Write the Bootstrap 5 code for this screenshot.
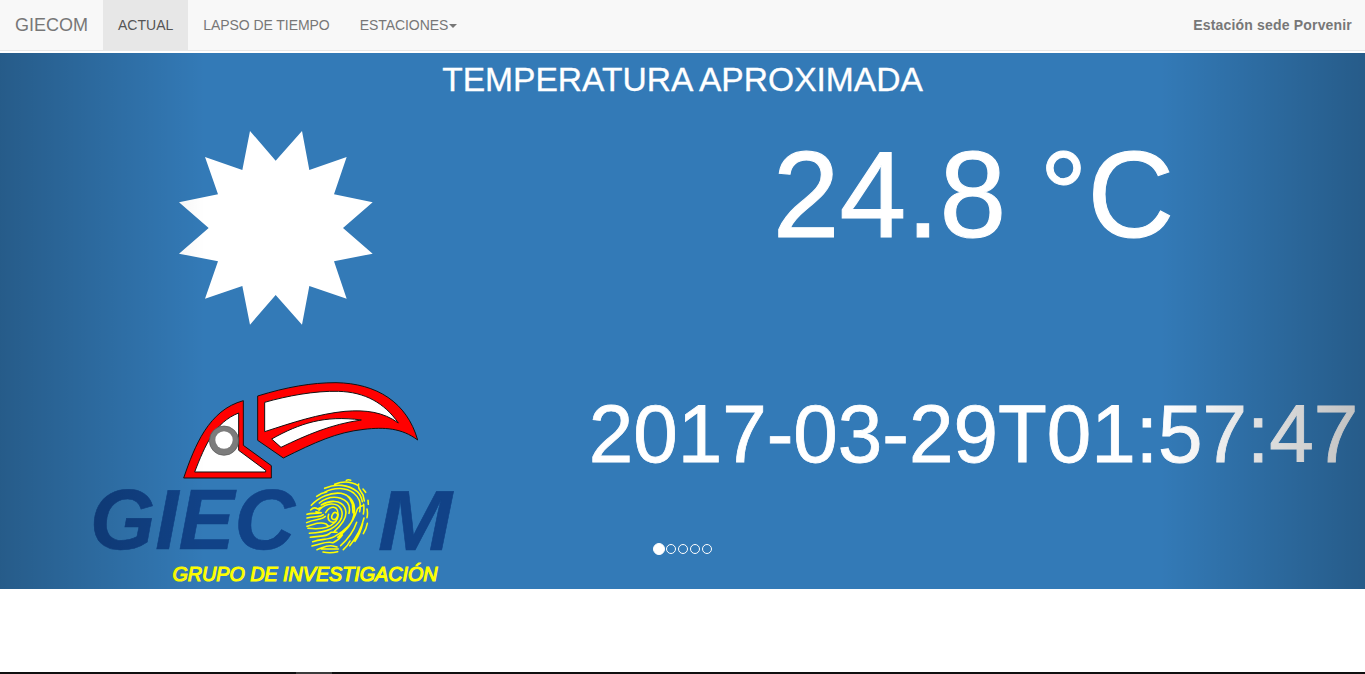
<!DOCTYPE html>
<html lang="es">
<head>
<meta charset="utf-8">
<meta name="viewport" content="width=device-width, initial-scale=1">
<title>GIECOM</title>
<link href="https://cdn.jsdelivr.net/npm/bootstrap@5.3.0/dist/css/bootstrap.min.css" rel="stylesheet">
<style>
body{font-family:"Liberation Sans",Arial,sans-serif;font-size:14px;line-height:20px;height:674px;overflow:hidden;background:#fff}
.topbar{height:51px;background:#f8f8f8;border-bottom:1px solid #e7e7e7!important;margin-bottom:2px}
.topbar .navbar-brand{font-size:18px;line-height:20px;color:#777;padding:15px;margin:0}
.topbar .nav-link{color:#777;padding:15px!important;line-height:20px;letter-spacing:-.06px}
.topbar .nav-link.active{color:#555;background:#e7e7e7;letter-spacing:0}
.topbar .dropdown-toggle::after{border-top:4px solid;border-left:4px solid transparent;border-right:4px solid transparent;margin-left:1px;vertical-align:middle}
.station{color:#777;letter-spacing:.18px;padding-right:13px}
.slide-area{height:536px;background:#337ab7;color:#fff}
.slide-title{font-size:33.6px;line-height:40px;height:67px;padding-top:7px;font-weight:400;-webkit-text-stroke:.3px #fff}
.left-col{width:582px}
.sun{margin-left:160px}
.logo{margin-left:80px;margin-top:35px}
.temp{font-size:120px;line-height:132px;margin-top:8px;-webkit-text-stroke:1px #fff;transform:scaleY(1.025)}
.stamp{font-size:80px;line-height:88px;margin-top:130px;-webkit-text-stroke:.8px #fff;transform:scaleY(1.03)}
.edge{width:15%;opacity:.5;pointer-events:none}
.edge-l{background:linear-gradient(to right,rgba(0,0,0,.5),rgba(0,0,0,0))}
.edge-r{background:linear-gradient(to left,rgba(0,0,0,.5),rgba(0,0,0,0))}
.dots{bottom:34px}
.dot{width:10px;height:10px;margin:1px;border:1px solid #fff;border-radius:50%}
.dot.on{width:12px;height:12px;margin:0;background:#fff}
.bottom-strip{height:2px;background:#101010;padding-left:296px}
.bottom-strip span{width:36px;height:2px;background:#3c3c3c}
</style>
</head>
<body class="d-flex flex-column">
<nav class="topbar navbar navbar-expand p-0 align-items-start flex-shrink-0">
  <a class="navbar-brand" href="#">GIECOM</a>
  <ul class="navbar-nav">
    <li class="nav-item"><a class="nav-link active" href="#">ACTUAL</a></li>
    <li class="nav-item"><a class="nav-link" href="#">LAPSO DE TIEMPO</a></li>
    <li class="nav-item dropdown"><a class="nav-link dropdown-toggle" href="#">ESTACIONES</a></li>
  </ul>
  <strong class="station ms-auto align-self-center">Estación sede Porvenir</strong>
</nav>
<main class="slide-area position-relative flex-shrink-0 overflow-hidden">
  <h1 class="slide-title text-center m-0">TEMPERATURA APROXIMADA</h1>
  <div class="d-flex">
    <div class="left-col flex-shrink-0">
      <svg class="sun d-block" width="230" height="215" viewBox="0 0 690 645"><path fill="#fff" d="M270 33 347 122 426 33 448 150 560 111 522 223 638 247 549 324 638 401 522 424 560 536 448 498 426 614 347 525 270 614 247 498 135 536 174 424 57 401 146 324 57 247 174 223 135 111 247 150Z"/></svg>
      <svg class="logo d-block" width="390" height="219" viewBox="80 370 390 219">
        <g transform="translate(170 370) scale(.33333)" stroke="#111" stroke-width="3">
          <path fill="#f00" d="M220 92V226L304 287V324H41C74 228 116 120 220 92Z"/>
          <path fill="#fff" d="M206 129V241L287 301V306H74C105 225 135 157 206 129Z"/>
          <circle cx="162" cy="212" r="44" fill="#7c7c7c" stroke="#555" stroke-width="2"/>
          <circle cx="162" cy="210" r="26" fill="#fff" stroke="none"/>
          <path fill="#f00" d="M263 78C350 51 425 38 498 38C620 40 711 97 743 210C695 174 643 171 582 178C499 187 435 217 340 264L263 211Z"/>
          <path fill="#fff" d="M284 97C350 78 435 62 505 64C585 66 643 99 685 159C640 126 588 119 525 124C445 132 370 157 284 185Z"/>
          <path fill="#fff" d="M305 207C389 160 464 135 574 150C482 163 408 196 333 232Z"/>
        </g>
        <g fill="#114287" stroke="#114287" stroke-width=".6" font-family="Liberation Sans,Arial,sans-serif" font-size="86" font-style="italic" font-weight="700">
          <text x="90" y="549.3" textLength="205" lengthAdjust="spacingAndGlyphs">GIEC</text>
          <text x="378" y="549.5" textLength="74" lengthAdjust="spacingAndGlyphs">M</text>
        </g>
        <g transform="translate(295 470) scale(.33333)" fill="none" stroke="#ff0" stroke-width="4.7" stroke-linecap="round" stroke-linejoin="round">
          <ellipse cx="119" cy="138" rx="8" ry="11" transform="rotate(25 119 138)"/>
          <path d="M154 31Q160 28 167 31M119 43C143 33 168 34 190 47M89 55C122 40 160 43 187 65Q198 75 202 95M88 67C120 50 154 53 176 69C193 83 199 97 194 125M65 79C76 71 84 68 95 66M49 106C71 81 108 66 138 70C166 76 181 97 178 124C176 160 153 181 128 202M73 99C92 84 115 78 137 85C158 92 167 108 162 130M79 105C105 89 137 90 149 112C163 141 139 166 118 184M72 121C92 97 128 95 139 119C148 143 131 164 107 177C84 188 63 189 43 190M92 128C106 104 130 107 129 134C130 152 113 166 95 172C77 178 58 177 39 175M91 139C82 151 61 145 35 158M101 133C95 151 107 159 119 156M36 144C59 138 76 142 85 134M36 133C50 128 59 132 79 128L63 125M47 120C55 111 61 112 68 117L79 112M36 169C61 161 75 156 92 161L101 169M46 202C75 197 97 201 108 187L126 187M53 215C80 205 98 211 118 200C149 183 171 162 181 134C187 116 189 111 202 107M51 228C82 222 91 213 114 218C130 211 137 202 142 195M66 239C87 232 93 225 114 228L126 231M84 246Q106 251 128 245M79 237L130 237M137 227C155 211 176 184 185 157M145 239Q158 228 165 213M164 227C185 202 200 172 207 144M180 214C190 199 199 179 203 160M205 191Q214 176 217 160M216 143Q219 130 216 117M205 132Q208 119 206 103M191 42Q188 52 197 64L204 75L208 93M204 57L212 67M219 91L220 103M154 75Q167 85 172 102L174 128"/>
        </g>
        <text x="172.5" y="581.3" textLength="265" lengthAdjust="spacingAndGlyphs" fill="#ff0" stroke="#ff0" stroke-width="1.1" font-family="Liberation Sans,Arial,sans-serif" font-size="20" font-style="italic">GRUPO DE INVESTIGACIÓN</text>
      </svg>
    </div>
    <div class="flex-fill text-center text-nowrap">
      <div class="temp">24.8 °C</div>
      <div class="stamp">2017-03-29T01:57:47</div>
    </div>
  </div>
  <div class="edge edge-l position-absolute top-0 bottom-0 start-0"></div>
  <div class="edge edge-r position-absolute top-0 bottom-0 end-0"></div>
  <div class="dots position-absolute start-0 end-0 d-flex justify-content-center">
    <span class="dot on"></span><span class="dot"></span><span class="dot"></span><span class="dot"></span><span class="dot"></span>
  </div>
</main>
<div class="bottom-strip mt-auto flex-shrink-0 d-flex"><span></span></div>
<script src="https://cdn.jsdelivr.net/npm/bootstrap@5.3.0/dist/js/bootstrap.bundle.min.js"></script>
</body>
</html>
